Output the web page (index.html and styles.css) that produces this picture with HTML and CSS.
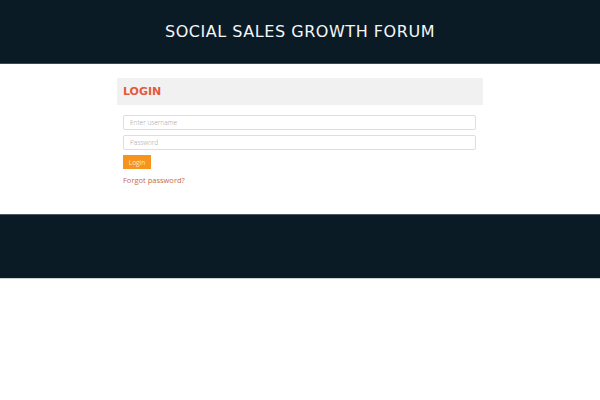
FILE: index.html
```html
<!DOCTYPE html>
<html>
<head>
<meta charset="utf-8">
<link rel="stylesheet" href="styles.css">
</head>
<body>
<header class="site-header">
  <h1 class="site-title">SOCIAL SALES GROWTH FORUM</h1>
</header>
<main class="main">
  <div class="container">
    <div class="panel-head">
      <h2 class="panel-title">LOGIN</h2>
    </div>
    <form class="login-form">
      <input class="field" type="text" placeholder="Enter username">
      <input class="field" type="password" placeholder="Password">
      <button class="btn" type="button">Login</button>
      <a class="forgot" href="#">Forgot password?</a>
    </form>
  </div>
</main>
<footer class="site-footer"></footer>
</body>
</html>
```
FILE: styles.css
```css
* { box-sizing: border-box; }
html, body { margin: 0; padding: 0; background: #fff; }
body { font-family: "DejaVu Sans", sans-serif; }

.site-header {
  height: 64px;
  background: #0b1b26;
  border-bottom: 1px solid #3a4a52;
  display: flex;
  align-items: center;
  justify-content: center;
}
.site-title {
  margin: 0;
  color: #f4f6f8;
  font-family: "DejaVu Sans", sans-serif;
  font-weight: normal;
  font-size: 16px;
  letter-spacing: 0.54px;
}

.main {
  height: 150px;
  padding-top: 14px;
}
.container {
  width: 366px;
  margin: 0 auto;
}
.panel-head {
  height: 27px;
  background: #f1f1f1;
  display: flex;
  align-items: center;
  padding-left: 6px;
}
.panel-title {
  margin: 0;
  font-family: "DejaVu Sans", sans-serif;
  font-weight: bold;
  font-size: 11px;
  color: #e4593d;
}

.login-form {
  display: flex;
  flex-direction: column;
  align-items: flex-start;
  padding: 10px 6px 0 6px;
}
.field {
  width: 353px;
  height: 15px;
  border: 1px solid #dedede;
  border-radius: 2px;
  padding: 0 6px;
  margin: 0 0 5px 0;
  font-family: "Open Sans", sans-serif;
  font-weight: 300;
  font-size: 6.5px;
  color: #555;
  background: #fff;
}
.field::placeholder { color: #a0a0a0; }
.btn {
  height: 14px;
  width: 28px;
  padding: 0;
  border: none;
  background: #f7941d;
  color: #fde7cf;
  font-family: "Open Sans", sans-serif;
  font-size: 6.5px;
}
.forgot {
  margin-top: 6px;
  font-family: "Open Sans", sans-serif;
  font-size: 7.5px;
  color: #c56a4a;
  text-decoration: none;
}

.site-footer {
  height: 65px;
  background: #0b1b26;
  border-top: 1px solid #4a5a62;
  border-bottom: 1px solid #c9d3d6;
}
```
